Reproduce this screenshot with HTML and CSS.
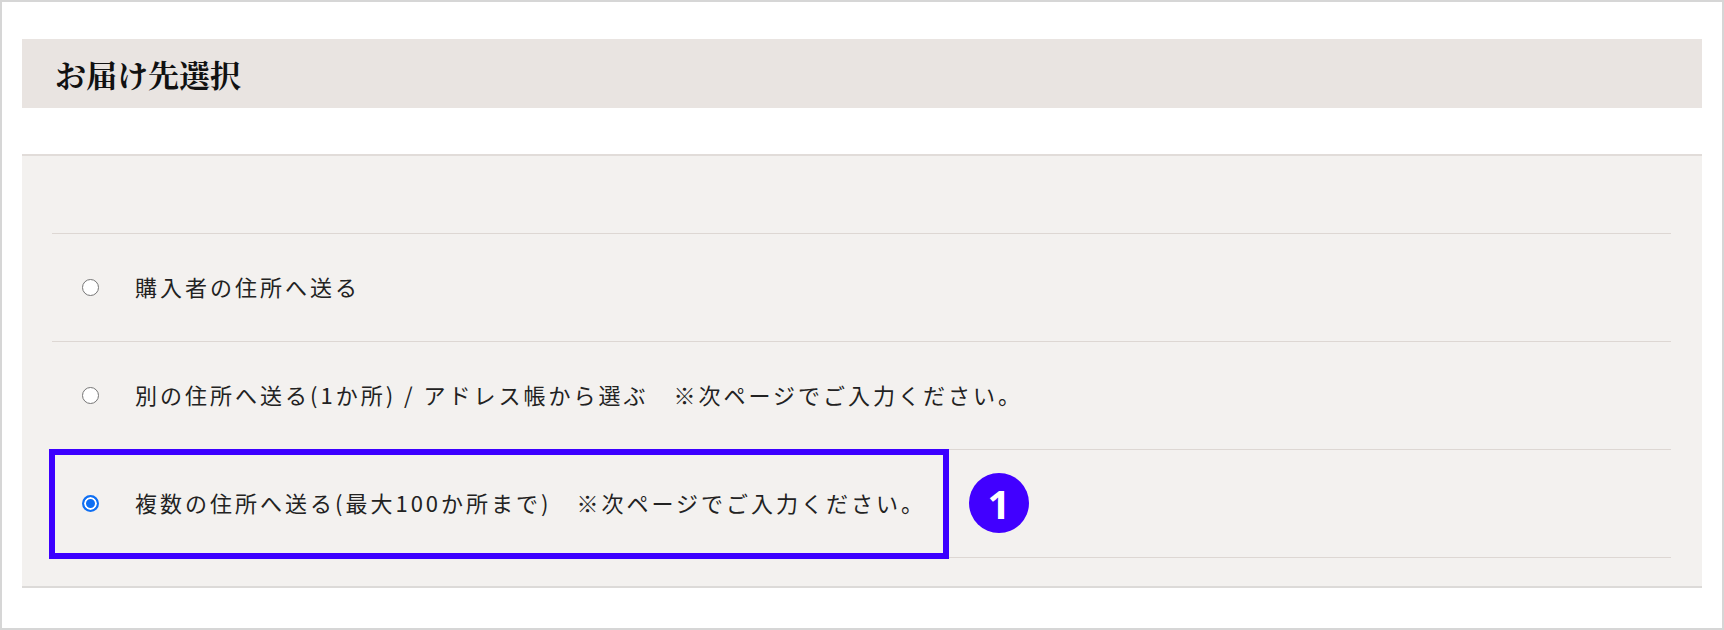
FILE: index.html
```html
<!DOCTYPE html>
<html lang="ja">
<head>
    <meta charset="UTF-8">
    <meta name="viewport" content="width=device-width, initial-scale=1.0">
    <title>お届け先選択</title>
    <link rel="stylesheet" href="styles.css">
</head>
<body>
    <div class="frame">
        <h2 class="heading">お届け先選択</h2>

        <div class="panel">
            <ul class="options">
                <li class="option">
                    <span class="radio"></span>
                    <span class="label">購入者の住所へ送る</span>
                </li>
                <li class="option">
                    <span class="radio"></span>
                    <span class="label">別の住所へ送る(1か所) / アドレス帳から選ぶ　※次ページでご入力ください。</span>
                </li>
                <li class="option">
                    <span class="radio checked"></span>
                    <span class="label">複数の住所へ送る(最大100か所まで)　※次ページでご入力ください。</span>
                    <div class="callout"></div>
                    <div class="badge">1</div>
                </li>
            </ul>
        </div>
    </div>
</body>
</html>
```

FILE: styles.css
```css
body {
    margin: 0;
    padding: 0;
    background-color: #fff;
    font-family: "Noto Sans CJK JP", "Noto Sans", sans-serif;
    color: #222;
}
.frame {
    width: 1724px;
    height: 630px;
    box-sizing: border-box;
    border: 2px solid #d6d6d6;
    padding: 37px 20px 0 20px;
    background-color: #fff;
}
.heading {
    margin: 0;
    height: 69px;
    display: flex;
    align-items: center;
    padding-left: 33px;
    background-color: #e9e4e1;
    font-family: "Noto Serif CJK JP", "Liberation Serif", "Noto Sans CJK JP", serif;
    font-size: 31px;
    font-weight: bold;
    color: #111;
}
.panel {
    margin-top: 46px;
    background-color: #f3f1ef;
    border-top: 2px solid #e1dcd9;
    border-bottom: 2px solid #dcdad8;
    padding: 77px 31px 28px 30px;
}
.options {
    list-style: none;
    margin: 0;
    padding: 0;
    border-bottom: 1px solid #ddd7d3;
}
.option {
    position: relative;
    height: 107px;
    border-top: 1px solid #ddd7d3;
    display: flex;
    align-items: center;
    padding-left: 30px;
}
.radio {
    width: 17px;
    height: 17px;
    box-sizing: border-box;
    border: 1px solid #767676;
    border-radius: 50%;
    background-color: #fff;
    flex-shrink: 0;
}
.radio.checked {
    border: 2px solid #0f6ff3;
    background-color: #0f6ff3;
    box-shadow: inset 0 0 0 2px #fff;
}
.label {
    margin-left: 36px;
    margin-bottom: 3px;
    font-size: 22px;
    letter-spacing: 3px;
    line-height: 1;
}
.callout {
    position: absolute;
    left: -3px;
    top: -1px;
    width: 900px;
    height: 110px;
    box-sizing: border-box;
    border: 6px solid #3c00ff;
}
.badge {
    position: absolute;
    left: 917px;
    top: 23px;
    width: 60px;
    height: 60px;
    border-radius: 50%;
    background-color: #4100ff;
    color: #fff;
    font-family: "Noto Sans", "Open Sans", sans-serif;
    font-size: 40px;
    font-weight: bold;
    display: flex;
    align-items: center;
    justify-content: center;
}
```
